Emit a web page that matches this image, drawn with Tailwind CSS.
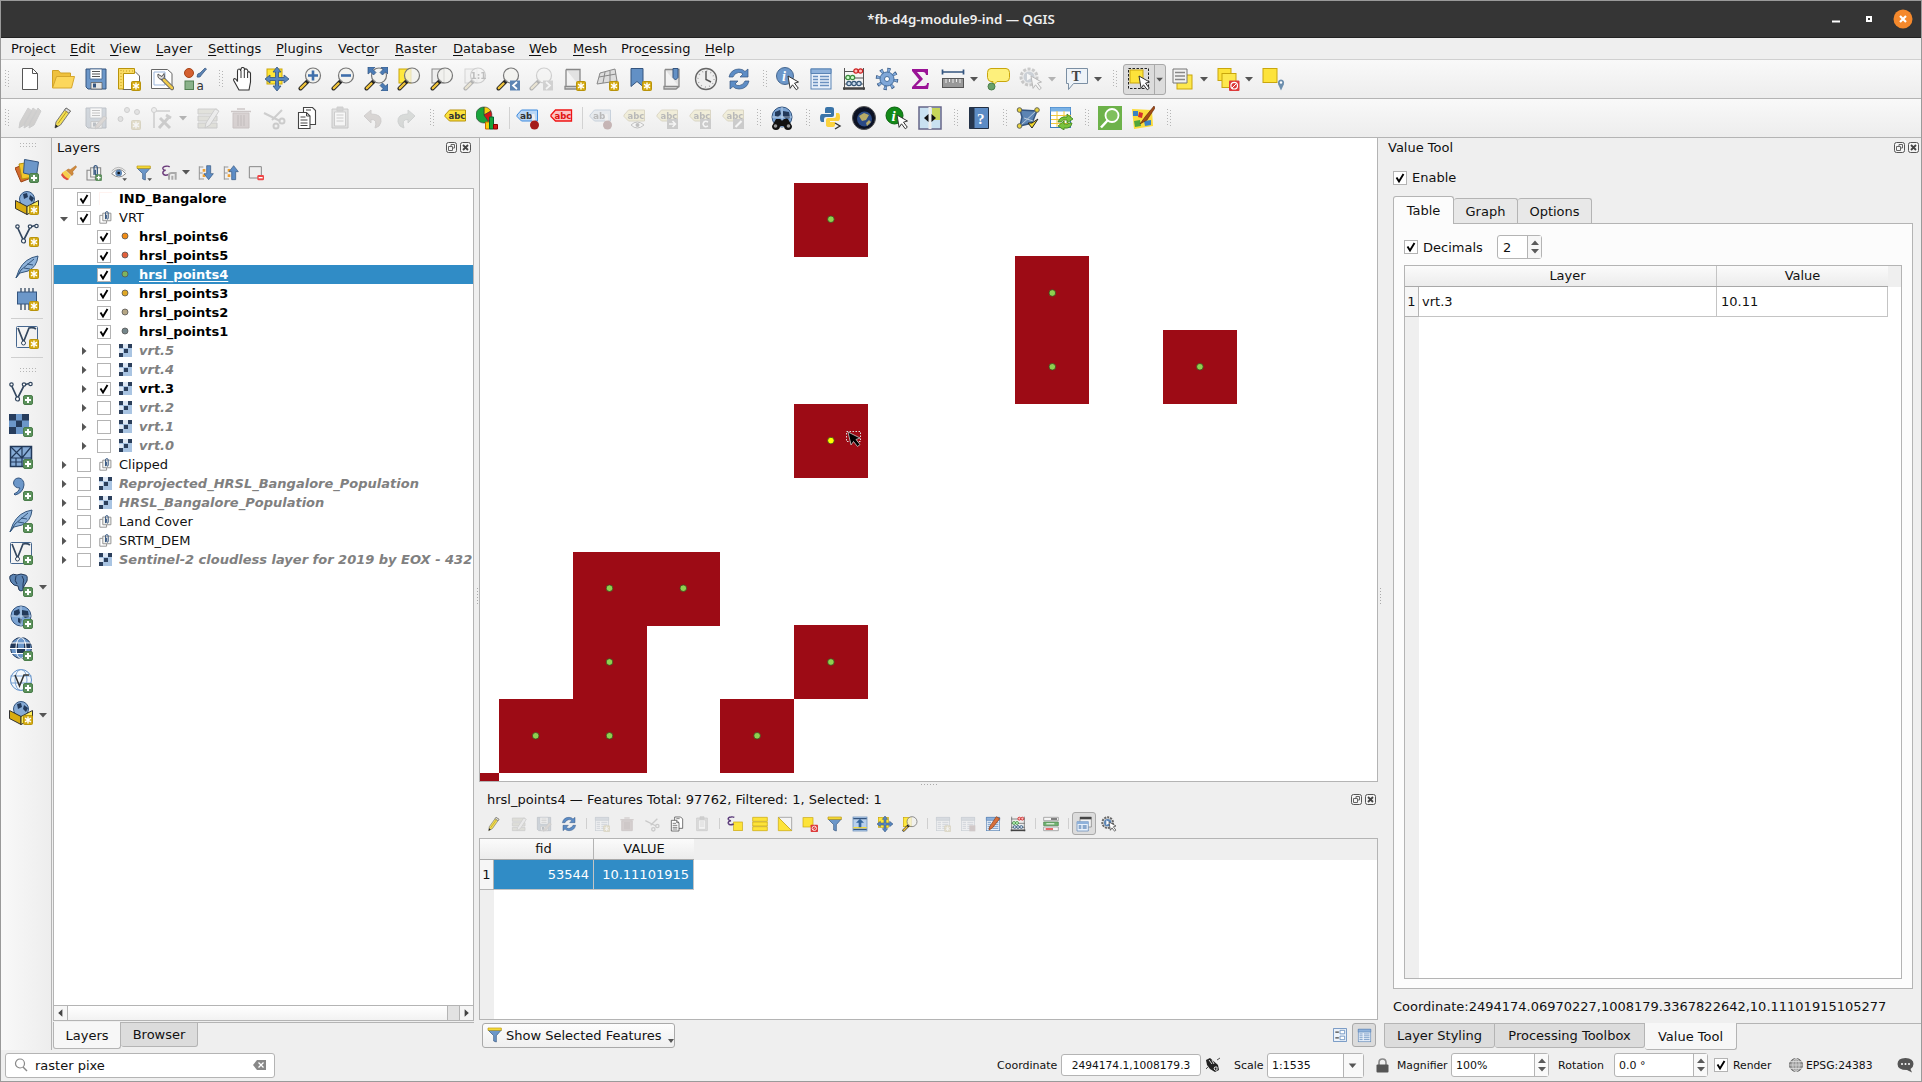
<!DOCTYPE html>
<html lang="en">
<head>
<meta charset="utf-8">
<title>QGIS</title>
<script src="https://cdn.jsdelivr.net/npm/@tailwindcss/browser@4"></script>
</head>
<body class="w-[1922px] h-[1082px] overflow-hidden bg-[#efefef] font-['DejaVu_Sans',sans-serif] text-[13px] leading-[19px] text-[#111]">

<svg class="hidden">
  <linearGradient id="gb" x2="1" y2="1"><stop stop-color="#dfe9f4"/><stop offset="1" stop-color="#6f97c6"/></linearGradient>
  <symbol id="b-new" viewBox="0 0 24 24"><rect x="14.5" y="14.5" width="9" height="9" rx="1" fill="#d5ab12" stroke="#b8930b"/><path d="M19 15.5v7M16 17.2l6 3.6M22 17.2l-6 3.6" stroke="#fff" stroke-width="1.4"/></symbol>
  <symbol id="b-add" viewBox="0 0 24 24"><rect x="14.5" y="14.5" width="9" height="9" rx="1.5" fill="#5d935d" stroke="#4a7d4a"/><path d="M19 16v6M16 19h6" stroke="#fff" stroke-width="2"/></symbol>
  <symbol id="b-glass" viewBox="0 0 24 24"><path d="M9.500 14.500L2.500 21.500" stroke="#222" stroke-width="4" stroke-linecap="round"/><path d="M7.500 16.500L2.800 21.200" stroke="#f0c43c" stroke-width="2.400" stroke-linecap="round"/><circle cx="15" cy="8.500" r="7.500" fill="#f2f2ee" fill-opacity=".75" stroke="#777" stroke-width="1.200"/></symbol>
  <symbol id="b-cur" viewBox="0 0 24 24"><path d="M12 9l10.500 6-4 1.200 3.800 5-2 1.600-3.800-5-2.400 3.600z" fill="#fff" stroke="#333"/></symbol>
  <symbol id="b-globe" viewBox="0 0 24 24"><circle cx="12" cy="11" r="10" fill="#7ba3d2" stroke="#34557f"/><path d="M5 6l5-2 1 4-3 3-3-1zM13 5l6 1 1 6-4 1-3-3zM9 13l4 1-1 5-3-2z" fill="#22395a"/><path d="M2 11h20M12 1v20" stroke="#d3e1f0" stroke-width=".7"/></symbol>
  <symbol id="b-v" viewBox="0 0 24 24"><path d="M2.500 4.500L8.500 17.500 15 4.500q3-2 6-2" fill="none" stroke="#33475f" stroke-width="1.700"/><g fill="#fff" stroke="#33475f" stroke-width="1.200"><circle cx="2.500" cy="3.500" r="1.700"/><circle cx="8.500" cy="18" r="2"/><circle cx="15" cy="3.500" r="1.700"/><circle cx="21.500" cy="3" r="1.700"/></g></symbol>
  <symbol id="b-feather" viewBox="0 0 24 24"><path d="M1 23L4 15Q10 3 23 1 22 12 13 16L5 18z" fill="#8fb3da" stroke="#33557c"/><path d="M1 23L6 15 19 4M9 13l6 1M12 9l6 1" stroke="#33557c" fill="none"/></symbol>
  <symbol id="b-sheet" viewBox="0 0 24 24"><path d="M4 2.500h14v17H3v2.500h12l3-2.500M4 2.500v17" fill="#e2e2e2" stroke="#888" stroke-width="1.300"/></symbol>
  <symbol id="b-box" viewBox="0 0 24 24"><circle cx="12" cy="8" r="7.500" fill="#86abd6" stroke="#34557f"/><path d="M8 3l4-1 1 4-4 2zM15 4l4 3-2 4-3-3z" fill="#22395a"/><path d="M.5 9.500L12 15.500v8L.5 17.500z" fill="#d8ab10" stroke="#333"/><path d="M23.500 9.500L12 15.500v8l11.500-6z" fill="#fbec59" stroke="#333"/></symbol>
  <symbol id="new" viewBox="0 0 24 24"><path d="M4.500 1.500h10l5 5v16h-15z" fill="#fff" stroke="#555"/><path d="M14.500 1.500v5h5" fill="none" stroke="#555"/></symbol>
  <symbol id="open" viewBox="0 0 24 24"><path d="M1.500 21V3.500h6l2 2.500h10v4" fill="#efc13d" stroke="#cfa126"/><path d="M1.500 21L5.500 9.500h18l-3 11.500z" fill="#fcd75c" stroke="#d5a62d"/></symbol>
  <symbol id="save" viewBox="0 0 24 24"><path d="M2 2h20v20H4l-2-2z" fill="#6c97c9" stroke="#34557f"/><path d="M6 2h12v10H6z" fill="#fff" stroke="#46678f" stroke-width=".8"/><path d="M8 4.500h8M8 7h8M8 9.500h8" stroke="#555"/><path d="M7 15.500h11v6.500H7z" fill="#e5e5e5" stroke="#555" stroke-width=".7"/><path d="M9 16.500h3v4H9z" fill="#34557f"/></symbol>
  <symbol id="layout" viewBox="0 0 24 24"><path d="M6 4.500h12l4.500 4.500v13.500H6z" fill="#fff" stroke="#666"/><path d="M1.500 1.500h16v5H6.500V22h-5z" fill="#fadb63" stroke="#b8930b"/><path d="M4 3v17M6 4h11" stroke="#c69d1c" stroke-dasharray="1 2"/><use href="#b-new"/></symbol>
  <symbol id="layouts" viewBox="0 0 24 24"><path d="M1.500 2.500h16l4.500 4v15h-20.500z" fill="#fff" stroke="#666"/><path d="M4 5h11v13H4z" fill="none" stroke="#9db7dc"/><path d="M13 12l9 9" stroke="#666" stroke-width="4.500" stroke-linecap="round"/><path d="M14 13l8 8" stroke="#f0cb4c" stroke-width="2.500" stroke-linecap="round"/><path d="M8 7q-1 5 4 5.500 4-2 2-6l-2 3-2-1z" fill="#ddd" stroke="#555"/></symbol>
  <symbol id="style" viewBox="0 0 24 24"><circle cx="6" cy="6" r="4.500" fill="#d45f2f" stroke="#a64317"/><path d="M14 10q0-4 3-4l5-5 1.500 1-5 6q-1 3-4.500 2z" fill="#5c84b3" stroke="#34557f" stroke-width=".7"/><rect x="2" y="14" width="8.500" height="8.500" fill="#8bb28b" stroke="#527f52"/><text x="13.500" y="22.500" font-size="12" fill="#333">a</text></symbol>
  <symbol id="hand" viewBox="0 0 24 24"><path d="M7 23l-5-9q-1-2 .5-2.500 1.500 0 3 3V4q0-2 1.500-2t1.700 2L9 2q.5-1.700 2-1.500 1.700.3 1.500 2 1.200-1 2.300-.3T16 5q2-.6 2.500 1.500V15l-1.500 8z" fill="#fff" stroke="#333" stroke-width="1.100"/><path d="M9 4v7M12.300 3v8M15.600 5v6" stroke="#333"/></symbol>
  <symbol id="pansel" viewBox="0 0 24 24"><rect x="2" y="2" width="15" height="15" fill="#ffe637" stroke="#c9a60c"/><path d="M12 0l4 5h-2.500v5.500H19V8l5 4-5 4v-2.500h-5.500V19H16l-4 5-4-5h2.500v-5.500H5V16l-5-4 5-4v2.500h5.500V5H8z" fill="#5786bf" stroke="#34557f" stroke-width=".8"/></symbol>
  <symbol id="zin" viewBox="0 0 24 24"><use href="#b-glass"/><path d="M15 3.500v10M10 8.500h10" stroke="#3f6fab" stroke-width="2.600"/></symbol>
  <symbol id="zout" viewBox="0 0 24 24"><use href="#b-glass"/><path d="M10 8.500h10" stroke="#3f6fab" stroke-width="2.600"/></symbol>
  <symbol id="zfull" viewBox="0 0 24 24"><use href="#b-glass"/><path d="M4 0h7L9 2.500l3 3L9.500 8l-3-3L4 7zM24 0h-7l2 2.500-3 3L18.500 8l3-3L24 7zM24 24h-7l2-2.500-3-3 2.500-2.500 3 3 2.500-2z" fill="#4b7bb4" stroke="#34557f" stroke-width=".7"/></symbol>
  <symbol id="zsel" viewBox="0 0 24 24"><rect x="2" y="2" width="12" height="14" fill="#ffe93c" stroke="#c9a60c"/><use href="#b-glass"/></symbol>
  <symbol id="zlay" viewBox="0 0 24 24"><rect x="2" y="2" width="12" height="14" fill="#eee" stroke="#888"/><use href="#b-glass"/></symbol>
  <symbol id="z11" viewBox="0 0 24 24"><rect x="2" y="2" width="12" height="14" fill="#eee" stroke="#888"/><use href="#b-glass"/><text x="7.500" y="12" font-size="9" font-weight="bold" fill="#444">1:1</text></symbol>
  <symbol id="zlast" viewBox="0 0 24 24"><use href="#b-glass"/><rect x="14" y="13.500" width="10" height="10" fill="#5c84b3"/><path d="M21 15l-4 3.500 4 3.500" stroke="#fff" stroke-width="1.700" fill="none"/></symbol>
  <symbol id="znext" viewBox="0 0 24 24"><use href="#b-glass"/><rect x="14" y="13.500" width="10" height="10" fill="#888"/><path d="M17 15l4 3.500-4 3.500" stroke="#fff" stroke-width="1.700" fill="none"/></symbol>
  <symbol id="map2" viewBox="0 0 24 24"><use href="#b-sheet"/><use href="#b-new"/></symbol>
  <symbol id="map3" viewBox="0 0 24 24"><path d="M5 6l15-4 2 12-20 3z" fill="#ddd" stroke="#888"/><path d="M10 5L8 16M15 4v11M4 10l17-3" stroke="#888"/><use href="#b-new"/></symbol>
  <symbol id="bmnew" viewBox="0 0 24 24"><path d="M3 1.500h12v18l-6-5-6 5z" fill="#6290c5" stroke="#34557f"/><use href="#b-new"/></symbol>
  <symbol id="bm" viewBox="0 0 24 24"><use href="#b-sheet"/><path d="M12 1.500h5v9l-2.500 2.500-2.500-2.500z" fill="#6290c5" stroke="#34557f"/></symbol>
  <symbol id="clock" viewBox="0 0 24 24"><circle cx="12" cy="12" r="10.500" fill="#eee" stroke="#666" stroke-width="1.300"/><circle cx="12" cy="12" r="8" fill="none" stroke="#aaa" stroke-dasharray="1 3.200" stroke-width="1.500"/><path d="M12 4v8.500l5 2.500" stroke="#555" stroke-width="1.400" fill="none"/></symbol>
  <symbol id="refresh" viewBox="0 0 24 24"><path d="M2 10Q4 2 12 2q4 0 6 2.500L21 2v8h-8l3-3q-2-2-4.500-1.500Q7.500 6 6 10z" fill="#5d8dc6" stroke="#34557f" stroke-width=".7"/><path d="M22 14q-2 8-10 8-4 0-6-2.500L3 22v-8h8l-3 3q2 2 4.500 1.500 4-.5 5.500-4.500z" fill="#5d8dc6" stroke="#34557f" stroke-width=".7"/></symbol>
  <symbol id="info" viewBox="0 0 24 24"><circle cx="9" cy="9" r="8.500" fill="#6c97c9" stroke="#46678f"/><text x="6" y="14" font-size="14" font-style="italic" font-weight="bold" font-family="Liberation Serif" fill="#fff">i</text><use href="#b-cur"/></symbol>
  <symbol id="table" viewBox="0 0 24 24"><rect x="2" y="2" width="20" height="20" fill="#e8f0fa" stroke="#5a84b5"/><path d="M2 2h20v4.500H2z" fill="#8fb2db" stroke="#5a84b5"/><path d="M4 9.500h5M4 12.500h5M4 15.500h5M4 18.500h5M11 9.500h9M11 12.500h9M11 15.500h9M11 18.500h9" stroke="#6a90bf" stroke-width="1.300"/></symbol>
  <symbol id="abacus" viewBox="0 0 24 24"><path d="M2.500 1v22M21.500 1v22M2 4.500h20M2 11h20M2 17h20" stroke="#555"/><path d="M1 21.500h22" stroke="#444" stroke-width="2.500"/><g stroke-width="1.200"><g fill="#fbb" stroke="#c22"><circle cx="14" cy="4" r="2.200"/><circle cx="18.500" cy="4" r="2.200"/></g><g fill="#cfc" stroke="#3a8a3a"><circle cx="6" cy="10.500" r="2.200"/><circle cx="10.500" cy="10.500" r="2.200"/></g><g fill="#cde" stroke="#357"><circle cx="7" cy="16.500" r="2.200"/><circle cx="12" cy="16.500" r="2.200"/><circle cx="17" cy="16.500" r="2.200"/></g></g></symbol>
  <symbol id="gear" viewBox="0 0 24 24"><circle cx="12" cy="12" r="9" fill="none" stroke="#34557f" stroke-width="4.500" stroke-dasharray="3 4.070"/><circle cx="12" cy="12" r="7" fill="#7fa7d8" stroke="#46709f"/><circle cx="12" cy="12" r="9" fill="none" stroke="#7fa7d8" stroke-width="3" stroke-dasharray="2.200 4.870" stroke-dashoffset="-.4"/><circle cx="12" cy="12" r="2.500" fill="#fff" stroke="#46709f"/></symbol>
  <symbol id="sigma" viewBox="0 0 24 24"><path d="M4 2h16v6h-2q-.5-3-3-3H9l6 7-7 7h8q3 0 3-3h2l-1 6H4v-2l7-7.500L4 4z" fill="#9a1396"/></symbol>
  <symbol id="measure" viewBox="0 0 24 24"><path d="M1.500 2.500v5M22.500 2.500v5M2 5h20" stroke="#34557f" stroke-width="1.700"/><rect x="1.500" y="11.500" width="21" height="9" fill="#999" stroke="#555"/><path d="M5 12v4M8.500 12v3M12 12v4M15.500 12v3M19 12v4" stroke="#eee"/></symbol>
  <symbol id="tips" viewBox="0 0 24 24"><path d="M5 1.500h15q3.500 0 3.500 4v5q0 4-3.500 4h-9l-5 5 1-5H5q-3 0-3.500-4v-5Q1.500 1.500 5 1.500z" fill="#fdf07c" stroke="#c9a60c"/><circle cx="5.500" cy="19.500" r="3.500" fill="#69a06a" stroke="#4a7d4a"/></symbol>
  <symbol id="action" viewBox="0 0 24 24"><circle cx="10" cy="10" r="8" fill="#ddd" stroke="#666" stroke-width="3" stroke-dasharray="3 1.500"/><circle cx="10" cy="10" r="5.500" fill="#5a84b5"/><path d="M8 6.500l6 3.500-6 3.500z" fill="#fff"/><use href="#b-cur"/></symbol>
  <symbol id="text" viewBox="0 0 24 24"><path d="M1.500 1.500h21v15H8.500l-5 6v-6h-2z" fill="#eef3f8" stroke="#7b8fa3"/><text x="6.500" y="14" font-size="14" font-weight="bold" font-family="Liberation Serif" fill="#444">T</text></symbol>
  <symbol id="select" viewBox="0 0 24 24"><rect x="1.500" y="1.500" width="20" height="20" fill="none" stroke="#222" stroke-dasharray="2.500 1.500"/><rect x="3" y="3" width="13" height="13" fill="#fde33a" stroke="#c9a60c"/><use href="#b-cur"/></symbol>
  <symbol id="selval" viewBox="0 0 24 24"><rect x="6" y="8" width="15" height="14" fill="#fde84d" stroke="#c9a60c"/><path d="M2 2h14v14H2z" fill="#f2f2f2" stroke="#777"/><path d="M4 5.500h10M4 9h10M4 12.500h10" stroke="#888" stroke-width="1.300"/></symbol>
  <symbol id="desel" viewBox="0 0 24 24"><rect x="2" y="1.500" width="13" height="12" fill="#fde33a" stroke="#c9a60c"/><rect x="6" y="6.500" width="14" height="14" fill="#fde84d" stroke="#c9a60c"/><rect x="13" y="13.500" width="10.500" height="10.500" rx="1" fill="#dd3a3a"/><circle cx="18.200" cy="18.700" r="3.300" stroke="#fff" stroke-width="1.200" fill="none"/><path d="M16 21l4.500-4.500" stroke="#fff"/></symbol>
  <symbol id="selloc" viewBox="0 0 24 24"><rect x="2" y="1.500" width="14" height="14" fill="#fde33a" stroke="#c9a60c"/><path d="M20 23.500l-2.800-6q-1.200-4.500 2.800-5 4 .5 2.800 5z" fill="#6d8fae"/><circle cx="20" cy="15.500" r="1.200" fill="#fff"/></symbol>
  <symbol id="pen" viewBox="0 0 24 24"><path d="M4 22l1-6L15 2l4.500 3L9.500 19z" fill="#f3df55" stroke="#777"/><path d="M15 2l4.500 3-1.500 2.300-4.500-3z" fill="#ddd" stroke="#777"/><path d="M4 22l.7-3.500 2.500 1.700z" fill="#222"/><path d="M7 17.500L16 5" stroke="#b79b19"/></symbol>
  <symbol id="pens" viewBox="0 0 24 24"><path d="M1 22l1-6L10 2l4 3L6 19zM6 22l1-6L15 2l4 3-8 14zM11 22l1-6 8-14 3 3-7 14z" fill="#8b8178" stroke="#777"/></symbol>
  <symbol id="saveed" viewBox="0 0 24 24"><use href="#save"/><path d="M11 23l1-4 8-9 3 2-8 9z" fill="#b98" stroke="#777"/></symbol>
  <symbol id="addpt" viewBox="0 0 24 24"><g fill="#bbb" stroke="#777"><circle cx="10" cy="4" r="2.500"/><circle cx="20" cy="6" r="2.500"/><circle cx="3.500" cy="13" r="2.500"/></g><use href="#b-new"/></symbol>
  <symbol id="vertex" viewBox="0 0 24 24"><path d="M4 22V5h16" fill="none" stroke="#777" stroke-width="1.500"/><circle cx="4" cy="4" r="2.500" fill="#ddd" stroke="#777"/><path d="M9 22L19 11M10 12l10 10M16 9l5 3" stroke="#777" stroke-width="3"/></symbol>
  <symbol id="form" viewBox="0 0 24 24"><path d="M2 3h19v5H2zM2 10h19v5H2zM2 17h19v5H2z" fill="#b9b98c" stroke="#777"/><path d="M9 22l1-5 9-14 4 2-9 14z" fill="#ddd" stroke="#777"/></symbol>
  <symbol id="trash" viewBox="0 0 24 24"><path d="M4 7h16v15H4z" fill="#b57f7f" stroke="#855"/><path d="M2 5.500h20M8 3h8M9 9v11M12 9v11M15 9v11" stroke="#855" stroke-width="1.600"/></symbol>
  <symbol id="cut" viewBox="0 0 24 24"><path d="M2 7l16 8M20 4L10 14" stroke="#777" stroke-width="2"/><g fill="none" stroke="#777" stroke-width="2"><circle cx="20" cy="15" r="2.500"/><circle cx="14" cy="20" r="2.500"/></g></symbol>
  <symbol id="copy" viewBox="0 0 24 24"><g fill="#fff" stroke="#444" stroke-width="1.100"><path d="M8.500 1.500h9l3 3v14h-12z"/><path d="M3.500 6.500h8l3.500 3.500v12.500H3.500z"/></g><path d="M11.500 6.500V10H15M5.500 11h5M5.500 14h7M5.500 17h7M5.500 19.500h7M11 4h5" stroke="#444" fill="none"/></symbol>
  <symbol id="paste" viewBox="0 0 24 24"><path d="M4 3h16v19H4z" fill="#bbb" stroke="#666"/><path d="M6.500 6h11v14h-11z" fill="#fff" stroke="#777"/><path d="M9 1h6v4H9zM8.500 9h7M8.500 12h7M8.500 15h7" fill="#888" stroke="#777"/></symbol>
  <symbol id="undo" viewBox="0 0 24 24"><path d="M3 10l7-6v4q11 0 10 8-1 5-6 6 3-9-4-8.500V17z" fill="#a99084" stroke="#877"/></symbol>
  <symbol id="redo" viewBox="0 0 24 24"><path d="M21 10l-7-6v4Q3 8 4 16q1 5 6 6-3-9 4-8.500V17z" fill="#93a598" stroke="#788"/></symbol>
  <symbol id="lab" viewBox="0 0 24 24"><path d="M2 9l4.500-5H22.500v11H6.500L2 10.500z" fill="#fbe23c" stroke="#b8930b"/><text x="5.500" y="12.800" font-size="8.500" font-weight="bold" fill="#333">abc</text></symbol>
  <symbol id="pie" viewBox="0 0 24 24"><path d="M8 9V1a8 8 0 0 1 7 4z" fill="#f7d00c" stroke="#333" stroke-width=".6"/><path d="M8 9V1a8 8 0 1 0 4.500 14.500z" fill="#19a33c" stroke="#333" stroke-width=".6"/><path d="M8 9l7-4q2.500 6-2 11z" fill="#d51515" stroke="#333" stroke-width=".6"/><path d="M9.500 16h4v7h-4z" fill="#f7d00c" stroke="#c60"/><path d="M13.500 11h4v12h-4z" fill="#19a33c" stroke="#063"/><path d="M17.500 18.500h4V23h-4z" fill="#d51515" stroke="#800"/></symbol>
  <symbol id="labpin" viewBox="0 0 24 24"><path d="M1 9l4.500-5H21.500v11H5.500L1 10.500z" fill="#b9d6f5" stroke="#3d8adf"/><text x="4" y="12.800" font-size="9" font-weight="bold" fill="#333">ab</text><path d="M17 8l1 8" stroke="#eee" stroke-width="3"/><circle cx="18.500" cy="19" r="4.500" fill="#a51c1c"/></symbol>
  <symbol id="labred" viewBox="0 0 24 24"><path d="M2 9l4.500-5H22.500v11H6.500L2 10.500z" fill="#fbc4c4" stroke="#f01414" stroke-width="1.300"/><text x="5.500" y="12.800" font-size="8.500" font-weight="bold" fill="#e01010">abc</text></symbol>
  <symbol id="labeye" viewBox="0 0 24 24"><use href="#lab"/><path d="M9 19q6-6 13 0-7 6-13 0z" fill="#fff" stroke="#555"/><circle cx="15.500" cy="19" r="2" fill="#555"/></symbol>
  <symbol id="labmv" viewBox="0 0 24 24"><use href="#lab"/><rect x="12" y="13" width="11" height="10" fill="#777"/><path d="M14 18h6M17.500 15l3 3-3 3" stroke="#fff" stroke-width="1.500" fill="none"/></symbol>
  <symbol id="labrot" viewBox="0 0 24 24"><use href="#lab"/><rect x="12" y="13" width="11" height="10" fill="#777"/><path d="M20 16q-4-2-5 2 1 4 5 2" stroke="#fff" stroke-width="1.500" fill="none"/></symbol>
  <symbol id="labed" viewBox="0 0 24 24"><use href="#lab"/><rect x="12" y="13" width="11" height="10" fill="#777"/><path d="M14.500 21l6-6" stroke="#fff" stroke-width="2.200"/></symbol>
  <symbol id="metas" viewBox="0 0 24 24"><use href="#b-globe"/><path d="M6 13h4l2 2 2-2h4l4 7q0 4-4 4t-4-4h-4q0 4-4 4t-4-4z" fill="#111"/><circle cx="5.500" cy="20" r="1.800" fill="#999"/><circle cx="18.500" cy="20" r="1.800" fill="#999"/></symbol>
  <symbol id="python" viewBox="0 0 24 24"><path d="M12 1H8Q6 1 6 3v4h6v1H3Q1 8 1 12t2 4h2v-3q0-2 2-2h6q2 0 2-2V3q0-2-3-2z" fill="#3a74a8"/><path d="M10 21h4q2 0 2-2v-3h-5v-1h8q2 0 2-4t-2-4h-2v3q0 2-2 2H9q-2 0-2 2v5q0 2 3 2z" fill="#fbd23e"/><path d="M16 17l5 3-5 3" stroke="#333" fill="none" stroke-width="1.400"/></symbol>
  <symbol id="osm" viewBox="0 0 24 24"><circle cx="12" cy="12" r="11.500" fill="#0c1224" stroke="#555"/><circle cx="12.500" cy="13" r="7.500" fill="#2b4a86"/><path d="M7 10l5-3 5 2-3 5-4 1zM14 17l3-3 2 2-4 4z" fill="#b9ab67"/></symbol>
  <symbol id="ginfo" viewBox="0 0 24 24"><circle cx="9.500" cy="9.500" r="8.500" fill="#128a17" stroke="#0a640d"/><text x="6.500" y="15" font-size="15" font-style="italic" font-weight="bold" font-family="Liberation Serif" fill="#fff">i</text><use href="#b-cur"/></symbol>
  <symbol id="swipe" viewBox="0 0 24 24"><rect x="1" y="1" width="22" height="22" fill="#c9e1f1" stroke="#668" stroke-width="1.500"/><path d="M14 2h8v12h-8z" fill="#c7d65a"/><path d="M12 1v22" stroke="#eee" stroke-width="3"/><path d="M10.500 8v8L6 12zM13.500 8v8l4.500-4z" fill="#111"/></symbol>
  <symbol id="help" viewBox="0 0 24 24"><path d="M2.500 1.500h19v21h-19z" fill="#5c8bc4" stroke="#222f42"/><path d="M2.500 1.500h5v21h-5z" fill="#26364d"/><text x="10" y="17.500" font-size="15" font-weight="bold" font-family="Liberation Serif" fill="#fff">?</text></symbol>
  <symbol id="topo" viewBox="0 0 24 24"><path d="M4 4l17 1-5 12L4 20l2-9z" fill="#5c84b3" stroke="#34557f" stroke-width="1.500"/><path d="M4 20L21 4M8 12l9 3" stroke="#bcd" /><g fill="#e6d23c" stroke="#665"><circle cx="3.500" cy="4" r="2.300"/><circle cx="21" cy="4" r="2.300"/><circle cx="3.500" cy="20" r="2.300"/></g><path d="M12 17l4 5 6-9-6 4z" fill="#f4da2b" stroke="#222"/></symbol>
  <symbol id="tabref" viewBox="0 0 24 24"><rect x="1.500" y="1.500" width="20" height="20" fill="#fff" stroke="#3f7fc1"/><path d="M1.500 1.500h20v4h-20z" fill="#7ab2e6"/><path d="M2 9.500h20M2 13.500h20M2 17.500h20M8 5v16M15 5v16" stroke="#f0c83c"/><path d="M9 16q2-6 9-5V8l6 5-6 4v-3q-4-1-6 2zM23 17q-1 6-8 5v2l-6-4 6-5v3q4 1 5-1z" fill="#7ac23c" stroke="#3a8314" stroke-width=".8"/></symbol>
  <symbol id="gsearch" viewBox="0 0 24 24"><rect width="24" height="24" fill="#6db24a"/><circle cx="14" cy="9.500" r="6.500" fill="#7fc05c" stroke="#fff" stroke-width="1.800"/><path d="M9.500 14.500L3 21.500" stroke="#fff" stroke-width="2.500"/></symbol>
  <symbol id="paint" viewBox="0 0 24 24"><path d="M1 3l20 1 1 16-19 3z" fill="#fbdc3c"/><path d="M2 5h5v5H2z" fill="#3b82c4"/><path d="M8 6l4 1-1 5-4-1z" fill="#d42f2f"/><path d="M3 15l6-1 1 6-6 1z" fill="#4fa53c"/><path d="M13 15l7-1v5l-6 1z" fill="#3b82c4"/><path d="M23 0l-9 11-5 7 7-4 8-12z" fill="#a34b17" stroke="#5a2407" stroke-width=".6"/></symbol>
  <symbol id="dsm" viewBox="0 0 24 24"><path d="M0 9l10-4 6 14-10 4z" fill="#d3692e" stroke="#9d4413"/><path d="M4 5l12-2 3 15-12 2z" fill="#f1c62d" stroke="#b8930b"/><path d="M9.500.5l14 2.500-2 14-13-3z" fill="#6c97c9" stroke="#34557f"/><use href="#b-add"/></symbol>
  <symbol id="gpkg" viewBox="0 0 24 24"><use href="#b-box"/><use href="#b-new"/></symbol>
  <symbol id="shpnew" viewBox="0 0 24 24"><use href="#b-v"/><use href="#b-new"/></symbol>
  <symbol id="spatnew" viewBox="0 0 24 24"><use href="#b-feather"/><use href="#b-new"/></symbol>
  <symbol id="memnew" viewBox="0 0 24 24"><path d="M6 1v22M10 1v22M14 1v22M18 1v22" stroke="#33475f" stroke-width="1.300"/><rect x="2.500" y="5" width="19" height="12" fill="#6c97c9" stroke="#34557f"/><use href="#b-new"/></symbol>
  <symbol id="b-vbox" viewBox="0 0 24 24"><rect x="1.500" y="1.500" width="21" height="21" rx="1" fill="url(#gb)" stroke="#46678f"/><path d="M3 3l5.500 14L14 3q4-1 7 1" fill="none" stroke="#33475f" stroke-width="1.700"/><circle cx="8.500" cy="18" r="2" fill="#fff" stroke="#33475f"/></symbol>
  <symbol id="virtnew" viewBox="0 0 24 24"><use href="#b-vbox"/><use href="#b-new"/></symbol>
  <symbol id="vadd" viewBox="0 0 24 24"><use href="#b-v"/><use href="#b-add"/></symbol>
  <symbol id="radd" viewBox="0 0 24 24"><path d="M0 1h20v20H0z" fill="#6c97c9"/><path d="M0 1h7v6.500H0zM13 1h7v6.500h-7zM7 7.500h6V14H7zM0 14h7v7H0z" fill="#263c5c"/><use href="#b-add"/></symbol>
  <symbol id="meshadd" viewBox="0 0 24 24"><path d="M1.500 1.500h21v20h-21z" fill="#86abd6" stroke="#22395a" stroke-width="1.500"/><path d="M1.500 13h21M13 1.500v20M2 2l11 11M13 2L2 13M22 2L13 13M7 13v8M2 17h11" stroke="#22395a" stroke-width="1.200"/><use href="#b-add"/></symbol>
  <symbol id="csvadd" viewBox="0 0 24 24"><path d="M5 17q5-2 6-6-6 0-6.500-5Q5 1 10 1q5 1 5 7-1 8-9 10z" fill="#6c97c9" stroke="#34557f"/><use href="#b-add"/></symbol>
  <symbol id="spatadd" viewBox="0 0 24 24"><use href="#b-feather"/><use href="#b-add"/></symbol>
  <symbol id="virtadd" viewBox="0 0 24 24"><use href="#b-vbox"/><use href="#b-add"/></symbol>
  <symbol id="pgadd" viewBox="0 0 24 24"><path d="M1 3q3-3 7-1 4-2 8 0 3 0 2 6l-3 5-1 4q-2 2-4 0l-1-4-4-1-3-3q-2-4-1-6z" fill="#5c84b3" stroke="#22395a"/><path d="M7 3q-2 5 1 8M13 3q3 4 1 8v5" stroke="#22395a" fill="none"/><use href="#b-add"/></symbol>
  <symbol id="wmsadd" viewBox="0 0 24 24"><use href="#b-globe"/><use href="#b-add"/></symbol>
  <symbol id="wcsadd" viewBox="0 0 24 24"><circle cx="12" cy="11" r="10.500" fill="#6c97c9" stroke="#22395a"/><path d="M2 6h7v5H2zM15 6h6v5h-6zM8 11h8v5H8z" fill="#22395a"/><path d="M1 6h22M1 11.500h22M2 16.500h20" stroke="#fff"/><ellipse cx="12" cy="11" rx="5" ry="10.500" fill="none" stroke="#fff"/><use href="#b-add"/></symbol>
  <symbol id="wfsadd" viewBox="0 0 24 24"><circle cx="12" cy="11" r="10.500" fill="#f4f8fc" stroke="#5a8cc6"/><path d="M1.500 7h21M1.500 14h21" stroke="#7ba3d2"/><ellipse cx="12" cy="11" rx="6" ry="10.500" fill="none" stroke="#7ba3d2"/><path d="M6 6l4.500 11L15 6h5" stroke="#333" stroke-width="1.500" fill="none"/><use href="#b-add"/></symbol>
  <symbol id="brush" viewBox="0 0 24 24"><path d="M1 12l6-4 8 8-4 6q-6-1-10-10z" fill="#f6cf4e"/><path d="M2 12q4 7 10 9l-3 2q-6-2-9-8z" fill="#dd4b3e"/><path d="M8 8l3-2 3 1 8-6 1.500 2-6 7 1 3-2 3z" fill="#d18a3c" stroke="#9d5a14" stroke-width=".6"/></symbol>
  <symbol id="group" viewBox="0 0 24 24"><path d="M7 8H1.500v14.500H14V18" fill="none" stroke="#888" stroke-width="1.600"/><path d="M7 4h15v14H7z" fill="#f2f2ee" stroke="#888" stroke-width="1.600"/><path d="M12 15V4q0-3 2.500-3T17 4v9q0 2-1.500 2T14 13V7" fill="none" stroke="#34557f" stroke-width="1.800"/></symbol>
  <symbol id="groupadd" viewBox="0 0 24 24"><use href="#group"/><use href="#b-add"/></symbol>
  <symbol id="eye" viewBox="0 0 24 24"><path d="M1 13Q12 0 22 13 12 23 1 13z" fill="#fff" stroke="#8a8a8a" stroke-width="1.500"/><path d="M1 9Q11-2 22 9" fill="none" stroke="#999"/><circle cx="11.500" cy="12" r="5" fill="#5c84b3"/><circle cx="11.500" cy="12" r="2" fill="#111"/><path d="M17 20h7l-3.500 4z" fill="#555"/></symbol>
  <symbol id="filt" viewBox="0 0 24 24"><path d="M1.500 4.500h20L14 13v9.500l-4-1.500V13z" fill="#6c97c9" stroke="#34557f"/><path d="M1.500 1.500h20V5h-20z" fill="#fbe23c" stroke="#b8930b"/></symbol>
  <symbol id="filtv" viewBox="0 0 24 24"><use href="#filt"/><path d="M17 20h7l-3.500 4z" fill="#555"/></symbol>
  <symbol id="expr" viewBox="0 0 24 24"><path d="M13 3Q11 1 7 2 2 3 3 6q1 2 4 2-5 1-4 5 2 4 9 1" fill="none" stroke="#6b3b7b" stroke-width="2.200"/><path d="M12 22v-7q0-3 4-3h6v10M17 22v-6" stroke="#aaa" stroke-width="3" fill="none"/></symbol>
  <symbol id="exprsel" viewBox="0 0 24 24"><rect x="10" y="9" width="13" height="13" fill="#fde33a" stroke="#c9a60c"/><path d="M11 2Q9 1 6 1.500 1 2 2 5q1 2 4 2-5 1-4 4 2 4 8 1" fill="none" stroke="#5b3b7b" stroke-width="2.200"/></symbol>
  <symbol id="expd" viewBox="0 0 24 24"><path d="M2 2v20M2 3h6M2 12h5M2 21h7" stroke="#999" stroke-width="1.600"/><path d="M7 6h4v4H7zM7 14h4v4H7z" fill="#f0a030"/><path d="M13 1h6v12h4l-7 9-7-9h4z" fill="#5d8dc6" stroke="#34557f"/></symbol>
  <symbol id="coll" viewBox="0 0 24 24"><path d="M2 2v20M2 3h6M2 12h5M2 21h7" stroke="#999" stroke-width="1.600"/><path d="M7 6h4v4H7zM7 14h4v4H7z" fill="#f0a030"/><path d="M13 22h6V10h4l-7-9-7 9h4z" fill="#5d8dc6" stroke="#34557f"/></symbol>
  <symbol id="rem" viewBox="0 0 24 24"><path d="M2 2.500h18v17H2z" fill="#eee" stroke="#888" stroke-width="1.500"/><rect x="14" y="15" width="10" height="8" rx="2" fill="#ee4646"/><path d="M16 19h6" stroke="#fff" stroke-width="2"/></symbol>
  <symbol id="selall" viewBox="0 0 24 24"><path d="M1 2h22v6H1zM1 9h22v6H1zM1 16h22v6H1z" fill="#fde33a" stroke="#c9a60c"/></symbol>
  <symbol id="invert" viewBox="0 0 24 24"><path d="M2 2h20v20z" fill="#f4f4f4" stroke="#888"/><path d="M2 2v20h20z" fill="#fde33a" stroke="#c9a60c"/></symbol>
  <symbol id="desel1" viewBox="0 0 24 24"><rect x="1.500" y="2.500" width="15" height="14" fill="#fde33a" stroke="#c9a60c"/><rect x="13" y="13" width="11" height="11" rx="1" fill="#dd3a3a"/><circle cx="18.500" cy="18.500" r="3.300" stroke="#fff" stroke-width="1.200" fill="none"/><path d="M16 21l4.500-4.500" stroke="#fff"/></symbol>
  <symbol id="movetop" viewBox="0 0 24 24"><rect x="1.500" y="1.500" width="21" height="21" fill="#b8d0ec" stroke="#5a84b5"/><path d="M2 4h20M2 20h20" stroke="#34557f" stroke-width="2"/><path d="M2 17.500h20" stroke="#f0d83c" stroke-width="2"/><path d="M12 4l6 6h-4v7h-4v-7H6z" fill="#34669f"/></symbol>
  <symbol id="tabnew" viewBox="0 0 24 24"><use href="#table"/><use href="#b-new"/></symbol>
  <symbol id="tabdel" viewBox="0 0 24 24"><use href="#table"/><path d="M14 14h9v9h-9z" fill="#a66"/></symbol>
  <symbol id="calced" viewBox="0 0 24 24"><use href="#table"/><path d="M6 21l1-5L17 1l5 3-11 14z" fill="#d8703a" stroke="#8d3a10"/></symbol>
  <symbol id="cond" viewBox="0 0 24 24"><path d="M1 2h22v5H1zM1 16.500h22V22H1z" fill="#f5f5f5" stroke="#888"/><path d="M1 9h22v5.500H1z" fill="#6fb36f" stroke="#4a7d4a"/><path d="M12 4.500h9" stroke="#444" stroke-width="2"/><path d="M4 19.500h11" stroke="#d22" stroke-width="2"/><path d="M5 11.700h12" stroke="#fff" stroke-width="1.500"/></symbol>
  <symbol id="dock" viewBox="0 0 24 24"><path d="M6 1.500h17v15H6z" fill="#f2f2f2" stroke="#777"/><path d="M6 1.500h17V5H6z" fill="#444"/><path d="M1.500 8.500h17v14h-17z" fill="#e8f0fa" stroke="#5a84b5"/><path d="M1.500 8.500h17V12h-17z" fill="#8fb2db"/><path d="M4 15h4M4 18h4M10 15h6M10 18h6" stroke="#6a90bf" stroke-width="2"/></symbol>
  <symbol id="formv" viewBox="0 0 24 24"><rect x="1" y="1" width="22" height="22" fill="#eef4fb" stroke="#6a90bf" stroke-width="1.500"/><path d="M4 7h6M4 17h6" stroke="#444" stroke-width="2"/><path d="M12 4h8v6h-8zM12 14h8v6h-8z" fill="#fff" stroke="#6a90bf" stroke-width="1.500"/></symbol>
  <symbol id="rast" viewBox="0 0 13 13"><path d="M0 0h13v13H0z" fill="#a9c4e2"/><path d="M0 0h4v4H0zM9 0h4v4H9zM5 5h4v4H5zM0 9h4v4H0z" fill="#2b3f5c"/><path d="M4 0h5v4H4zM0 5h4v4H0z" fill="#dfe9f5"/></symbol>
  <symbol id="float" viewBox="0 0 11 11"><rect x=".5" y=".5" width="10" height="10" rx="2" fill="#f4f4f4" stroke="#555"/><path d="M5 2.500h3.500V6H7M5 2.500V4M2.500 4.500H6.500v4h-4z" fill="none" stroke="#666"/></symbol>
  <symbol id="close" viewBox="0 0 11 11"><rect x=".5" y=".5" width="10" height="10" rx="2" fill="#f4f4f4" stroke="#555"/><path d="M3 3l5 5M8 3L3 8" stroke="#444" stroke-width="1.800"/></symbol>
  <symbol id="tick" viewBox="0 0 14 14"><rect x=".5" y=".5" width="13" height="13" fill="#fff" stroke="#b3b3b3"/><path d="M3.500 6.500l2.500 4L10.500 3" fill="none" stroke="#000" stroke-width="1.900"/></symbol>
  <symbol id="untick" viewBox="0 0 14 14"><rect x=".5" y=".5" width="13" height="13" fill="#fff" stroke="#b3b3b3"/></symbol>
  <symbol id="spin" viewBox="0 0 13 22"><path d="M3 9h8L7 4.500zM3 13h8l-4 4.500z" fill="#5a5a5a"/></symbol>
  <symbol id="grip" viewBox="0 0 7 18"><path d="M3.500 0v18M6.500 1v17" stroke="#b5b5b5" stroke-dasharray="1 2"/></symbol>
  <symbol id="griph" viewBox="0 0 16 5"><path d="M0 .5h16M0 3.500h16" stroke="#b5b5b5" stroke-dasharray="1 2"/></symbol>
</svg>

<div class="flex flex-col w-full h-full border border-[#9a9a9a]">
  <!-- title bar -->
  <header class="h-[37px] shrink-0 flex items-center bg-[#353535] border-b border-[#222] text-white">
    <div class="w-[1824px] pl-[96px] text-center font-['Noto_Sans',sans-serif] font-semibold text-[13.3px] text-[#eee]">*fb-d4g-module9-ind — QGIS</div>
    <svg class="w-[96px] h-9" viewBox="0 0 96 36"><path d="M7 20.500h8" stroke="#fff" stroke-width="2"/><rect x="42" y="16" width="4" height="4" fill="none" stroke="#fff" stroke-width="2"/><circle cx="78" cy="18" r="9.500" fill="#f5892c"/><path d="M75 15l6 6M81 15l-6 6" stroke="#fff" stroke-width="2.200"/></svg>
  </header>

  <nav class="h-[22px] shrink-0 flex items-center pl-[10px] border-b border-[#d0d0d0] underline-offset-2">
    <span class="w-[59px]">Pro<u>j</u>ect</span><span class="w-[40px]"><u>E</u>dit</span><span class="w-[46px]"><u>V</u>iew</span><span class="w-[52px]"><u>L</u>ayer</span><span class="w-[68px]"><u>S</u>ettings</span><span class="w-[62px]"><u>P</u>lugins</span><span class="w-[57px]">Vect<u>o</u>r</span><span class="w-[58px]"><u>R</u>aster</span><span class="w-[76px]"><u>D</u>atabase</span><span class="w-[44px]"><u>W</u>eb</span><span class="w-[48px]"><u>M</u>esh</span><span class="w-[84px]">Pro<u>c</u>essing</span><span><u>H</u>elp</span>
  </nav>

  <div class="h-[39px] shrink-0 flex items-center gap-[9px] pl-px border-b border-[#b4b4b4] bg-linear-to-b from-[#f9f9f9] to-[#ededed]" data-bar="24" data-items="h new open save layout layouts style h hand pansel zin zout zfull zsel zlay ~z11 zlast ~znext map2 map3 bmnew bm clock refresh h info table abacus gear sigma measure v tips ~action ~v text v h SELECT selval v desel v selloc"></div>
  <div class="h-[39px] shrink-0 flex items-center gap-[9px] pl-px border-b border-[#b4b4b4] bg-linear-to-b from-[#f9f9f9] to-[#ededed]" data-bar="24" data-items="h ~pens pen ~saveed ~addpt ~vertex ~v ~form ~trash ~cut copy ~paste ~undo ~redo h lab pie s labpin labred s ~labpin ~labeye ~labmv ~labrot ~labed h metas h python osm ginfo swipe h help h topo tabref h gsearch paint h"></div>

  <main class="flex h-[912px] shrink-0">
    <!-- data source toolbar -->
    <aside class="w-[51px] shrink-0 flex flex-col border-r border-[#b4b4b4] bg-linear-to-r from-[#f9f9f9] to-[#ededed] pt-[5px]">
      <svg class="w-4 h-[5px] ml-[19px] mb-[11px]"><use href="#griph"/></svg>
      <div class="flex flex-col gap-2 pl-[14px]" data-bar="24" data-items="dsm gpkg shpnew spatnew memnew"></div>
      <div class="h-px bg-[#cfcfcf] w-8 ml-[10px] mt-[7px] mb-[6px]"></div>
      <div class="pl-[14px]" data-bar="24" data-items="virtnew"></div>
      <div class="h-px bg-[#cfcfcf] w-8 ml-[10px] mt-[8px] mb-[10px]"></div>
      <svg class="w-4 h-[5px] ml-[19px] mb-[8px]"><use href="#griph"/></svg>
      <div class="relative flex flex-col gap-2 pl-[8px]">
        <div class="flex flex-col gap-2" data-bar="24" data-items="vadd radd meshadd csvadd spatadd virtadd pgadd wmsadd wcsadd wfsadd gpkg"></div>
        <svg class="absolute left-[38px] top-[204px] w-2 h-[5px]" viewBox="0 0 8 5"><path d="M0 0h8L4 4.500z" fill="#555"/></svg>
        <svg class="absolute left-[38px] top-[332px] w-2 h-[5px]" viewBox="0 0 8 5"><path d="M0 0h8L4 4.500z" fill="#555"/></svg>
      </div>
    </aside>

    <!-- layers dock -->
    <section class="w-[421px] shrink-0 flex flex-col ml-px">
      <div class="h-[19px] flex items-center pl-[4px] pr-[3px] gap-[3px]"><span class="grow">Layers</span><svg class="size-[11px]"><use href="#float"/></svg><svg class="size-[11px]"><use href="#close"/></svg></div>
      <div class="h-[31px] flex items-center gap-[9px] pl-[8px]" data-bar="16" data-items="brush groupadd eye filtv expr v expd coll rem"></div>
      <div class="h-[833px] flex flex-col border border-[#b4b4b4] bg-white overflow-hidden">
        <div id="tree" class="grow overflow-hidden whitespace-nowrap"></div>
        <div class="h-[15px] shrink-0 flex items-center border-t border-[#b4b4b4] bg-[#f6f6f6]">
          <svg class="w-[14px] h-[14px] border-r border-[#b4b4b4]" viewBox="0 0 14 14"><path d="M9 3v8L4.500 7z" fill="#444"/></svg>
          <div class="grow h-full bg-linear-to-b from-white to-[#f2f2f2]"></div>
          <div class="w-[12px] h-full bg-[#e2e2e2] border-l border-[#b4b4b4]"></div>
          <svg class="w-[14px] h-[14px] border-l border-[#b4b4b4]" viewBox="0 0 14 14"><path d="M5 3v8L9.500 7z" fill="#444"/></svg>
        </div>
      </div>
      <div class="flex items-start mt-px border-t border-[#b4b4b4]">
        <div class="w-[68px] h-[27px] -mt-px flex items-center justify-center border border-t-0 border-[#b4b4b4] rounded-b-[3px] bg-[#f7f7f7]">Layers</div>
        <div class="w-[77px] h-[25px] -mt-px flex items-center justify-center border border-l-0 border-[#b4b4b4] rounded-b-[3px] bg-[#dcdcdc]">Browser</div>
      </div>
    </section>
    <svg class="w-[5px] shrink-0 h-[912px]" viewBox="0 0 5 912"><path d="M3.500 450v17" stroke="#aaa" stroke-dasharray="1 2"/></svg>

    <!-- map and attribute table -->
    <section class="w-[899px] shrink-0 flex flex-col">
      <svg id="map" class="w-[899px] h-[644px] shrink-0 bg-white border border-t-0 border-[#b4b4b4]" viewBox="480 138 897 643"></svg>
      <div class="flex justify-center h-[7px] pt-[2px]"><svg class="w-4 h-[3px]" viewBox="0 0 16 3"><path d="M0 .5h16" stroke="#aaa" stroke-dasharray="1 2"/></svg></div>
      <div class="h-[20px] flex items-center pl-[8px] pr-[2px] gap-[3px]"><span class="grow">hrsl_points4 — Features Total: 97762, Filtered: 1, Selected: 1</span><svg class="size-[11px]"><use href="#float"/></svg><svg class="size-[11px]"><use href="#close"/></svg></div>
      <div class="h-[29px] flex items-center gap-[9px] pl-[7px]" data-bar="16" data-items="pen ~form ~saveed refresh s ~tabnew ~trash ~cut copy ~paste s exprsel selall invert desel1 filt movetop pansel zsel s ~tabnew ~tabdel calced abacus s cond s DOCK action"></div>
      <div class="h-[182px] border border-[#b4b4b4] bg-white flex flex-col">
        <div class="h-[21px] shrink-0 flex bg-[#efefef]">
          <div class="w-[214px] flex border-b border-[#a8a8a8] bg-linear-to-b from-[#fbfbfb] to-[#ececec]">
            <div class="w-[114px] pl-[14px] text-center border-r border-[#b4b4b4]">fid</div><div class="w-[100px] text-center">VALUE</div>
          </div>
        </div>
        <div class="grow flex">
          <div class="w-[14px] bg-[#efefef]"><div class="h-[30px] flex items-center justify-center border-b border-r border-[#b4b4b4] bg-[#f6f6f6]">1</div></div>
          <div class="h-[30px] flex items-center text-right text-white bg-[#308cc6] border-b border-r border-[#c4c4c4] pr-0">
            <div class="w-[100px] h-full pr-1 leading-[29px] border-r border-[#c4c4c4]">53544</div><div class="w-[99px] pr-1">10.11101915</div>
          </div>
        </div>
      </div>
      <div class="h-[30px] flex items-center pl-[3px]">
        <div class="w-[193px] h-[25px] flex items-center gap-[3px] pl-[4px] border border-[#a9a9a9] rounded-[3px] bg-linear-to-b from-[#fdfdfd] to-[#efefef]"><svg class="size-4"><use href="#filt"/></svg>Show Selected Features<svg class="w-[6px] h-1 mt-3 ml-[3px]" viewBox="0 0 6 4"><path d="M0 0h6L3 4z" fill="#555"/></svg></div>
        <svg class="size-[14px] ml-auto mr-[5px]"><use href="#formv"/></svg>
        <div class="w-[24px] h-[24px] flex items-center justify-center border border-[#a9a9a9] rounded-[3px] bg-[#dcdcdc] mr-[2px]"><svg class="size-[15px]"><use href="#table"/></svg></div>
      </div>
    </section>
    <svg class="w-[6px] shrink-0 h-[912px]" viewBox="0 0 6 912"><path d="M2.500 450v17" stroke="#aaa" stroke-dasharray="1 2"/></svg>

    <!-- value tool dock -->
    <section class="grow flex flex-col">
      <div class="h-[19px] flex items-center pl-[4px] pr-[2px] gap-[3px]"><span class="grow">Value Tool</span><svg class="size-[11px]"><use href="#float"/></svg><svg class="size-[11px]"><use href="#close"/></svg></div>
      <div class="h-[38px] flex items-center gap-[5px] pl-[9px] pt-[3px]"><svg class="size-[14px]"><use href="#tick"/></svg>Enable</div>
      <div class="h-[28px] flex items-end pl-[9px] relative">
        <div class="w-[61px] h-[28px] z-10 -mb-px flex items-center justify-center border border-b-0 border-[#b4b4b4] rounded-t-[3px] bg-[#fcfcfc]">Table</div>
        <div class="w-[64px] h-[25px] flex items-center justify-center border border-l-0 border-b-0 border-[#b4b4b4] rounded-t-[3px] bg-[#e8e8e8]">Graph</div>
        <div class="w-[74px] h-[25px] flex items-center justify-center border border-l-0 border-b-0 border-[#b4b4b4] rounded-t-[3px] bg-[#e8e8e8]">Options</div>
      </div>
      <div class="ml-[9px] w-[520px] h-[766px] border border-[#b4b4b4] bg-[#fcfcfc] px-[10px] pt-[11px] flex flex-col">
        <div class="h-[24px] flex items-center"><svg class="size-[14px] mr-[5px]"><use href="#tick"/></svg>Decimals
          <div class="ml-auto mr-[360px] w-[45px] h-[24px] flex items-center pl-[5px] border border-[#b4b4b4] rounded-[3px] bg-white">2<svg class="ml-auto w-[14px] h-[22px] border-l border-[#b4b4b4] bg-[#f6f6f6]"><use href="#spin"/></svg></div></div>
        <div class="mt-[6px] w-[498px] h-[714px] border border-[#b4b4b4] bg-white flex flex-col">
          <div class="h-[21px] shrink-0 flex bg-[#efefef]">
            <div class="w-[483px] flex text-center border-b border-[#a8a8a8] bg-linear-to-b from-[#fbfbfb] to-[#ececec]"><div class="w-[312px] pl-[14px] border-r border-[#c4c4c4]">Layer</div><div class="w-[171px]">Value</div></div>
          </div>
          <div class="grow flex">
            <div class="w-[14px] bg-[#efefef]"><div class="h-[30px] flex items-center justify-center border-b border-r border-[#b4b4b4] bg-[#f6f6f6]">1</div></div>
            <div class="h-[30px] flex items-center border-b border-r border-[#c4c4c4]"><div class="w-[298px] h-full pl-[3px] leading-[29px] border-r border-[#c4c4c4]">vrt.3</div><div class="w-[170px] pl-[4px]">10.11</div></div>
          </div>
        </div>
      </div>
      <div class="h-[34px] shrink-0 flex items-center pl-[9px]">Coordinate:2494174.06970227,1008179.3367822642,10.11101915105277</div>
      <div class="flex items-start border-t border-[#b4b4b4]">
        <div class="w-[111px] h-[25px] -mt-px flex items-center justify-center border border-[#b4b4b4] rounded-b-[3px] bg-[#dcdcdc]">Layer Styling</div>
        <div class="w-[150px] h-[25px] -mt-px flex items-center justify-center border border-l-0 border-[#b4b4b4] rounded-b-[3px] bg-[#dcdcdc]">Processing Toolbox</div>
        <div class="w-[92px] h-[27px] -mt-px flex items-center justify-center border border-l-0 border-t-0 border-[#b4b4b4] rounded-b-[3px] bg-[#f7f7f7]">Value Tool</div>
      </div>
    </section>
  </main>

  <!-- status bar -->
  <footer class="grow flex items-center text-[11px] pl-[4px] pb-px">
    <div class="w-[270px] h-[25px] flex items-center gap-[7px] px-[8px] border border-[#b4b4b4] rounded-[3px] bg-white text-[13px]">
      <svg class="size-[14px]" viewBox="0 0 14 14"><circle cx="6" cy="5.500" r="4.500" fill="none" stroke="#888" stroke-width="1.200"/><path d="M9 9l4 4" stroke="#888" stroke-width="1.500"/></svg><span class="grow">raster pixe</span>
      <svg class="w-[13px] h-[10px]" viewBox="0 0 13 10"><path d="M4 0h9v10H4L0 5z" fill="#888"/><path d="M5.500 2.500l5 5M10.500 2.500l-5 5" stroke="#fff" stroke-width="1.300"/></svg>
    </div>
    <span class="w-[64px] ml-[722px]">Coordinate</span>
    <div class="w-[140px] h-[22px] flex items-center justify-center border border-[#b4b4b4] rounded-[3px] bg-white text-[10.67px]">2494174.1,1008179.3</div>
    <svg class="w-[16px] h-[16px] ml-[4px]" viewBox="0 0 16 16"><path d="M1 3l4-2 8 7 1 5-4 2-5-3-3-4z" fill="#222"/><path d="M4 3l3 4M7 3l2 4M9 12q0-3 3-2v3q-2 1-3-1M1 11l2-2M12 3l3-2" stroke="#ddd" fill="none"/><path d="M1 12l2-2M12 3l3-2" stroke="#555"/></svg>
    <span class="w-[32px] ml-[13px]">Scale</span>
    <div class="w-[97px] h-[25px] flex items-center pl-[4px] border border-[#b4b4b4] rounded-[3px] bg-white ml-[1px]">1:1535<svg class="ml-auto w-[20px] h-[23px] border-l border-[#b4b4b4] bg-[#f9f9f9]" viewBox="0 0 20 23"><path d="M5 9.500h8L9 14z" fill="#555"/></svg></div>
    <svg class="w-[13px] h-[15px] ml-[12px]" viewBox="0 0 13 15"><path d="M3 7V4.500Q3 1 6.500 1T10 4.500V7" fill="none" stroke="#888" stroke-width="1.600"/><rect x=".5" y="6.500" width="12" height="8" rx="1" fill="#555"/></svg>
    <span class="w-[54px] ml-[8px] text-[10.8px]">Magnifier</span>
    <div class="w-[98px] h-[24px] flex items-center pl-[4px] border border-[#b4b4b4] rounded-[3px] bg-white">100%<svg class="ml-auto w-[14px] h-[22px] border-l border-[#b4b4b4] bg-[#f9f9f9]"><use href="#spin"/></svg></div>
    <span class="w-[56px] ml-[9px]">Rotation</span>
    <div class="w-[94px] h-[24px] flex items-center pl-[4px] border border-[#b4b4b4] rounded-[3px] bg-white">0.0 °<svg class="ml-auto w-[14px] h-[22px] border-l border-[#b4b4b4] bg-[#f9f9f9]"><use href="#spin"/></svg></div>
    <svg class="size-[14px] ml-[6px]"><use href="#tick"/></svg>
    <span class="w-[55px] ml-[5px] text-[10.8px]">Render</span>
    <svg class="size-[16px]" viewBox="0 0 16 16"><circle cx="8" cy="8" r="6.500" fill="#999" stroke="#666"/><path d="M.5 8h15M2 4.500h12M2 11.500h12M8 1v14" stroke="#ddd" stroke-width=".8"/><ellipse cx="8" cy="8" rx="3.200" ry="6.500" fill="none" stroke="#ddd" stroke-width=".8"/></svg>
    <span class="w-[91px] ml-[2px] text-[10.8px]">EPSG:24383</span>
    <svg class="w-[17px] h-[16px]" viewBox="0 0 17 16"><path d="M8.500 1q8 .5 8 6 0 3-3 5l1.500 3.500L10 13Q.5 13 .5 7t8-6z" fill="#555"/><g fill="#fff"><circle cx="5" cy="7" r="1"/><circle cx="8.500" cy="7" r="1"/><circle cx="12" cy="7" r="1"/></g></svg>
  </footer>
</div>

<script>
  const arrow = '<svg class="w-2 h-[5px] shrink-0 -ml-1 -mr-px" viewBox="0 0 8 5"><path d="M0 0h8L4 4.500z" fill="#555"/></svg>';
  const special = {
    h: '<svg class="w-[7px] h-[18px] shrink-0"><use href="#grip"/></svg>',
    s: '<div class="w-px shrink-0 bg-[#cfcfcf] h-[55%]"></div>',
    v: arrow,
    '~v': '<div class="opacity-40">' + arrow.replace('-mr-px', '') + '</div>',
    SELECT: '<div class="flex items-center w-[43px] h-[31px] shrink-0 -ml-[3px] -mr-1 border border-[#a9a9a9] rounded-[3px] bg-[#dcdcdc]"><svg class="size-6 mx-[3px] shrink-0"><use href="#select"/></svg><svg class="w-3 h-[29px] border-l border-[#a9a9a9]" viewBox="0 0 12 29"><path d="M1.500 12.500h8l-4 4.500z" fill="#555"/></svg></div>',
    DOCK: '<div class="flex items-center justify-center w-6 h-[23px] shrink-0 -ml-1 -mr-1 border border-[#a9a9a9] rounded-[3px] bg-[#dcdcdc]"><svg class="size-4"><use href="#dock"/></svg></div>'
  };
  document.querySelectorAll('[data-bar]').forEach(bar => {
    const big = bar.dataset.bar === '24';
    bar.innerHTML = bar.dataset.items.split(' ').map(k => {
      if (k === 's') return big
        ? '<div class="w-px h-[22px] shrink-0 bg-[#d2d2d2] -mr-[3px]"></div>'
        : '<div class="w-px h-[11px] shrink-0 bg-[#cfcfcf] -mr-[2px]"></div>';
      if (special[k]) return special[k];
      const dim = k[0] === '~';
      const id = dim ? k.slice(1) : k;
      const size = big ? 'size-6 shrink-0' : 'size-4 shrink-0';
      return '<svg class="' + size + (dim ? ' opacity-30 grayscale-[60%]' : '') + '"><use href="#' + id + '"/></svg>';
    }).join('');
  });

  const rows = [
    ['IND_Bangalore', 0, 'poly', 1, ''], ['VRT', 0, 'group', 1, 'open'],
    ['hrsl_points6', 1, '#f08c14', 1, ''], ['hrsl_points5', 1, '#e2603c', 1, ''], ['hrsl_points4', 1, '#7fb45c', 1, ''],
    ['hrsl_points3', 1, '#e0a826', 1, ''], ['hrsl_points2', 1, '#b5a684', 1, ''], ['hrsl_points1', 1, '#74868a', 1, ''],
    ['vrt.5', 1, 'rast', 0, 'shut'], ['vrt.4', 1, 'rast', 0, 'shut'], ['vrt.3', 1, 'rast', 1, 'shut'],
    ['vrt.2', 1, 'rast', 0, 'shut'], ['vrt.1', 1, 'rast', 0, 'shut'], ['vrt.0', 1, 'rast', 0, 'shut'],
    ['Clipped', 0, 'group', 0, 'shut'], ['Reprojected_HRSL_Bangalore_Population', 0, 'rast', 0, 'shut'],
    ['HRSL_Bangalore_Population', 0, 'rast', 0, 'shut'], ['Land Cover', 0, 'group', 0, 'shut'],
    ['SRTM_DEM', 0, 'group', 0, 'shut'], ['Sentinel-2 cloudless layer for 2019 by EOX - 432', 0, 'rast', 0, 'shut']
  ];
  document.getElementById('tree').innerHTML = rows.map(([name, lvl, icon, on, state]) => {
    const sel = name === 'hrsl_points4';
    const mark = state === 'open' ? '<path d="M2 5h8L6 9.500z" fill="#555"/>' : state === 'shut' ? '<path d="M4 2v8l4.500-4z" fill="#555"/>' : '';
    const pic = icon[0] === '#' ? '<circle cx="6" cy="6" r="3" fill="' + icon + '" stroke="#555" stroke-width=".8"/>'
      : icon === 'poly' ? '<rect x=".5" y=".5" width="13" height="13" fill="#fff" stroke="#fff3f0"/>' : '<use href="#' + icon + '"/>';
    const style = sel ? 'font-bold text-white underline underline-offset-2' : icon === 'group' ? '' : on ? 'font-bold text-black' : 'font-bold italic text-[#808080]';
    return '<div class="h-[19px] flex items-center ' + (lvl ? 'pl-[24px]' : 'pl-[4px]') + (sel ? ' bg-[#308cc6]' : '') + '">' +
      '<svg class="size-3 shrink-0 mr-[7px]" viewBox="0 0 12 12">' + mark + '</svg>' +
      '<svg class="size-[14px] shrink-0"><use href="#' + (on ? 'tick' : 'untick') + '"/></svg>' +
      '<svg class="size-[13px] shrink-0 ml-[8px] mr-[7px]">' + pic + '</svg>' +
      '<span class="' + style + '">' + name + '</span></div>';
  }).join('');

  // population cells as [column, row] on a 73.8 px grid
  const cells = [[4,0],[7,1],[7,2],[9,2],[4,3],[1,5],[2,5],[1,6],[4,6],[0,7],[1,7],[3,7]];
  const cx = c => 498.8 + 73.8 * c, cy = r => 182.6 + 73.8 * r;
  document.getElementById('map').innerHTML =
    '<g shape-rendering="crispEdges" fill="#9d0b15">' + cells.map(([c, r]) => '<rect x="' + cx(c) + '" y="' + cy(r) + '" width="73.9" height="73.9"/>').join('') + '<rect x="480" y="773" width="19" height="8"/></g>' +
    cells.map(([c, r]) => '<circle cx="' + (cx(c) + 36.9) + '" cy="' + (cy(r) + 36.6) + '" r="3.3" stroke="#3c4a1c" stroke-width=".8" fill="' + (c === 4 && r === 3 ? '#ffff00' : '#8fd050') + '"/>').join('') +
    '<rect x="846.5" y="431.500" width="14" height="10" fill="none" stroke="#ddd" stroke-dasharray="1.500 1.500"/><path d="M848 432l12 6-4 1.500 4 5-2.500 2-4-5-2.500 3.500z" fill="#000" stroke="#ccc" stroke-width=".8"/>';
</script>
</body>
</html>
